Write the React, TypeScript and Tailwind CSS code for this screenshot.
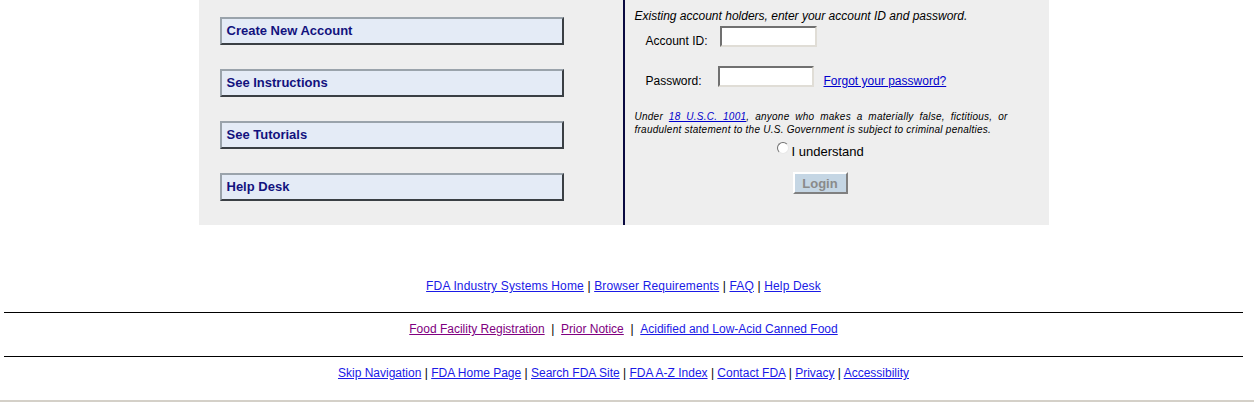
const menuButtons = ['Create New Account', 'See Instructions', 'See Tutorials', 'Help Desk'];

const Sep = ({ wide }: { wide?: boolean }) => (
  <span className="text-black">{wide ? '\u00a0 | \u00a0' : ' | '}</span>
);

const App = () => {
  return (
    <div className="h-[402px] w-[1254px] overflow-hidden bg-white font-['Liberation_Sans',Arial,sans-serif] flex flex-col">
      <div className="w-[1247px] flex flex-col">
        <div className="mx-auto flex h-[225px] w-[850px] bg-[#eeeeee]">
          <div className="flex w-[424px] flex-col gap-[24px] pl-[21px] pt-[17px]">
            {menuButtons.map((label) => (
              <div
                key={label}
                className="flex h-[28px] w-[344px] items-center border-2 border-t-[#9aa3ab] border-l-[#9aa3ab] border-b-[#3a3f44] border-r-[#3a3f44] bg-[#e4ebf6] pl-[5px] text-[13px] font-bold text-[#12127e]"
              >
                {label}
              </div>
            ))}
          </div>

          <div className="flex flex-1 flex-col border-l-2 border-[#0a0a40] pl-[10px] text-[12px] text-black">
            <p className="pt-[9px] leading-[14px] italic">
              Existing account holders, enter your account ID and password.
            </p>

            <div className="mt-[3px] flex items-end pl-[11px]">
              <span className="mb-[-1px] w-[74px] leading-[14px]">Account ID:</span>
              <input
                type="text"
                className="h-[21px] w-[97px] border-2 border-t-[#707070] border-l-[#707070] border-b-[#e0ddd6] border-r-[#e0ddd6] bg-white"
              />
            </div>

            <div className="mt-[19px] flex items-end pl-[11px]">
              <span className="mb-[-1px] w-[72px] leading-[14px]">Password:</span>
              <input
                type="password"
                className="h-[21px] w-[96px] border-2 border-t-[#707070] border-l-[#707070] border-b-[#e0ddd6] border-r-[#e0ddd6] bg-white"
              />
              <a href="#" className="mb-[-1px] ml-[10px] leading-[14px] text-[#0000cc] underline">
                Forgot your password?
              </a>
            </div>

            <p className="mt-[23px] w-[373px] text-justify text-[10px] leading-[13px] italic tracking-[0.25px]">
              Under{' '}
              <a href="#" className="text-[#0000cc] underline">
                18 U.S.C. 1001
              </a>
              , anyone who makes a materially false, fictitious, or fraudulent statement to the U.S. Government is subject to criminal penalties.
            </p>

            <div className="mt-[5px] flex items-start pl-[142px]">
              <span className="mt-[1px] block h-[12px] w-[12px] rounded-full border border-t-[#707070] border-l-[#707070] border-b-[#e8e8e8] border-r-[#e8e8e8] bg-white"></span>
              <span className="ml-[3px] mt-[3px] text-[13px] leading-[15px]">I understand</span>
            </div>

            <div className="mt-[13px] pl-[158px]">
              <button
                type="button"
                disabled
                className="h-[22px] w-[55px] border-2 border-t-white border-l-white border-b-[#808080] border-r-[#808080] bg-[#c5d6e4] text-[13px] font-bold text-[#8a8a8a]"
              >
                Login
              </button>
            </div>
          </div>
        </div>

        <div className="mt-[54px] text-center text-[12px] leading-[14px] tracking-[0.15px]">
          <a href="#" className="text-[#1a1ae6] underline">FDA Industry Systems Home</a>
          <Sep />
          <a href="#" className="text-[#1a1ae6] underline">Browser Requirements</a>
          <Sep />
          <a href="#" className="text-[#1a1ae6] underline">FAQ</a>
          <Sep />
          <a href="#" className="text-[#1a1ae6] underline">Help Desk</a>
        </div>

        <hr className="mx-[4px] mt-[19px] border-t border-black" />

        <div className="mt-[9px] text-center text-[12px] leading-[14px]">
          <a href="#" className="text-[#800080] underline">Food Facility Registration</a>
          <Sep wide />
          <a href="#" className="text-[#800080] underline">Prior Notice</a>
          <Sep wide />
          <a href="#" className="text-[#1a1ae6] underline">Acidified and Low-Acid Canned Food</a>
        </div>

        <hr className="mx-[4px] mt-[20px] border-t border-black" />

        <div className="mt-[9px] text-center text-[12px] leading-[14px]">
          <a href="#" className="text-[#1a1ae6] underline">Skip Navigation</a>
          <Sep />
          <a href="#" className="text-[#1a1ae6] underline">FDA Home Page</a>
          <Sep />
          <a href="#" className="text-[#1a1ae6] underline">Search FDA Site</a>
          <Sep />
          <a href="#" className="text-[#1a1ae6] underline">FDA A-Z Index</a>
          <Sep />
          <a href="#" className="text-[#1a1ae6] underline">Contact FDA</a>
          <Sep />
          <a href="#" className="text-[#1a1ae6] underline">Privacy</a>
          <Sep />
          <a href="#" className="text-[#1a1ae6] underline">Accessibility</a>
        </div>
      </div>

      <div className="mt-auto h-[2px] w-full bg-[#d4d0c8]"></div>
    </div>
  );
};

export default App;
